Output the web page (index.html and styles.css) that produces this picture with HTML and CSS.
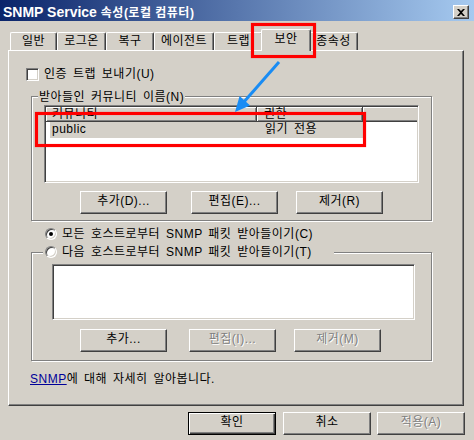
FILE: index.html
```html
<!DOCTYPE html>
<html lang="ko">
<head>
<meta charset="utf-8">
<title>SNMP Service 속성</title>
<link rel="stylesheet" href="styles.css">
</head>
<body>
<div class="titlebar">
  <div class="title">SNMP Service <span class="title-ko">속성(로컬 컴퓨터)</span></div>
  <div class="close"><svg width="8" height="7" viewBox="0 0 8 7"><path d="M0 0h2l2 2 2-2h2L5 3.5 8 7H6L4 5 2 7H0l3-3.5z" fill="#000"/></svg></div>
</div>

<div class="tabs">
  <div class="tab w-general">일반</div>
  <div class="tab w-logon">로그온</div>
  <div class="tab w-recovery">복구</div>
  <div class="tab w-agent">에이전트</div>
  <div class="tab w-traps">트랩</div>
  <div class="tab tab-selected">보안</div>
  <div class="tab w-deps">종속성</div>
</div>

<div class="panel">
  <div class="check-row"><span class="checkbox"></span><span class="label">인증 트랩 보내기(U)</span></div>

  <div class="group group-communities">
    <div class="legend legend-text">받아들인 커뮤니티 이름(N)</div>
    <div class="listview">
      <div class="lv-head">
        <div class="hc col1">커뮤니티</div>
        <div class="hc col2">권한</div>
        <div class="hc col3"></div>
      </div>
      <div class="lv-row">
        <div class="rc col1r">public</div>
        <div class="rc col2r">읽기 전용</div>
      </div>
    </div>
    <div class="btn-row row-a">
      <button class="btn">추가(D)...</button>
      <button class="btn gap-24">편집(E)...</button>
      <button class="btn gap-18">제거(R)</button>
    </div>
  </div>

  <div class="radio-row radio-all"><span class="radio on"><span class="dot"></span></span><span class="label">모든 호스트로부터 SNMP 패킷 받아들이기(C)</span></div>

  <div class="group group-hosts">
    <div class="legend legend-radio radio-row"><span class="radio"></span><span class="label">다음 호스트로부터 SNMP 패킷 받아들이기(T)</span></div>
    <div class="listbox"></div>
    <div class="btn-row row-b">
      <button class="btn">추가...</button>
      <button class="btn disabled gap-22">편집(I)...</button>
      <button class="btn disabled gap-18">제거(M)</button>
    </div>
  </div>

  <div class="link-row"><a class="link">SNMP</a>에 대해 자세히 알아봅니다.</div>
</div>

<div class="dlg-buttons">
  <button class="btn wide default">확인</button>
  <button class="btn wide gap-7">취소</button>
  <button class="btn wide disabled gap-6">적용(A)</button>
</div>

<div class="mark mark-tab"></div>
<div class="mark mark-row"></div>
<svg class="arrow" width="474" height="440" viewBox="0 0 474 440">
  <line x1="279" y1="62" x2="243" y2="103" stroke="#198cf4" stroke-width="3"/>
  <polygon points="235,112 239.6,96.1 250.1,105.4" fill="#198cf4"/>
</svg>
</body>
</html>
```
FILE: styles.css
```css
* { box-sizing: border-box; }
html, body { margin: 0; padding: 0; }
body {
  position: relative;
  width: 474px;
  height: 440px;
  overflow: hidden;
  background: #d4d0c8;
  color: #000;
  font-family: "Liberation Sans", "Noto Sans CJK KR", sans-serif;
  font-size: 12px;
  line-height: 14px;
  word-spacing: 2px;
  letter-spacing: 0.5px;
}

/* title bar */
.titlebar {
  height: 21px;
  display: flex;
  justify-content: space-between;
  align-items: flex-start;
  padding: 0 5px 0 3px;
  background: linear-gradient(to right, #0a246a, #a6caf0);
}
.title {
  color: #fff;
  font-weight: bold;
  font-size: 14px;
  line-height: 20px;
  padding-top: 2px;
  word-spacing: 0;
  letter-spacing: 0;
  white-space: nowrap;
}
.title-ko { font-size: 12px; letter-spacing: 0.5px; }
.close {
  margin-top: 5px;
  width: 16px;
  height: 14px;
  background: #d4d0c8;
  border-top: 1px solid #fff;
  border-left: 1px solid #fff;
  border-right: 1px solid #404040;
  border-bottom: 1px solid #404040;
  box-shadow: inset -1px -1px 0 #808080;
  display: flex;
  align-items: center;
  justify-content: center;
}

/* tabs */
.tabs {
  display: flex;
  align-items: flex-end;
  height: 21px;
  margin-top: 8px;
  padding-left: 10px;
}
.tab {
  height: 18px;
  border-top: 1px solid #fff;
  border-left: 1px solid #fff;
  border-right: 1px solid #404040;
  box-shadow: inset -1px 0 0 #808080;
  border-radius: 2px 2px 0 0;
  text-align: center;
  line-height: 16px;
  white-space: nowrap;
  word-spacing: 0;
}
.w-general { width: 47px; }
.w-logon { width: 49px; }
.w-recovery { width: 48px; }
.w-agent { width: 60px; }
.w-traps { width: 49px; }
.w-deps { width: 49px; }
.tab-selected {
  position: relative;
  z-index: 1;
  width: 50px;
  height: 22px;
  margin: 0 -2px -1px -2px;
  padding-top: 1px;
  background: #d4d0c8;
}

/* panel */
.panel {
  margin-left: 8px;
  width: 456px;
  height: 356px;
  border-top: 1px solid #fff;
  border-left: 1px solid #fff;
  border-right: 1px solid #404040;
  border-bottom: 1px solid #404040;
  box-shadow: inset -1px -1px 0 #808080;
  padding-top: 17px;
}

.check-row {
  display: flex;
  align-items: center;
  height: 13px;
  line-height: 13px;
  margin-left: 17px;
}
.checkbox {
  width: 13px;
  height: 13px;
  background: #fff;
  border-top: 1px solid #808080;
  border-left: 1px solid #808080;
  border-right: 1px solid #fff;
  border-bottom: 1px solid #fff;
  box-shadow: inset 1px 1px 0 #404040, inset -1px -1px 0 #d4d0c8;
  margin-right: 5px;
}

/* group boxes */
.group {
  margin-left: 22px;
  width: 401px;
  border: 1px solid #808080;
  box-shadow: 1px 1px 0 #fff, inset 1px 1px 0 #fff;
}
.group-communities { margin-top: 15px; padding-bottom: 6px; }
.group-hosts { margin-top: 11px; padding-bottom: 8px; }

.legend {
  background: #d4d0c8;
  height: 14px;
  line-height: 14px;
  white-space: nowrap;
}
.legend-text {
  width: max-content;
  margin: -7px 0 0 6px;
  padding: 0 1px;
}
.legend-radio {
  width: 291px;
  margin: -8px 0 0 11px;
  padding-left: 2px;
}

/* list view */
.listview, .listbox {
  background: #fff;
  border-top: 1px solid #808080;
  border-left: 1px solid #808080;
  border-right: 1px solid #fff;
  border-bottom: 1px solid #fff;
  box-shadow: inset 1px 1px 0 #404040, inset -1px -1px 0 #d4d0c8;
  padding: 1px;
}
.listview {
  margin: 1px 0 0 12px;
  width: 375px;
  height: 78px;
}
.lv-head {
  display: flex;
  height: 15px;
}
.hc {
  height: 15px;
  background: #d4d0c8;
  border-right: 1px solid #404040;
  border-bottom: 1px solid #404040;
  box-shadow: inset 1px 1px 0 #fff, inset -1px -1px 0 #808080;
  line-height: 14px;
  white-space: nowrap;
  word-spacing: 0;
}
.col1 { width: 211px; padding-left: 6px; }
.col2 { width: 106px; padding-left: 7px; }
.col3 { flex: 1; border-right: none; box-shadow: inset 1px 1px 0 #fff, inset 0 -1px 0 #808080; }
.lv-row {
  display: flex;
  margin-left: 4px;
  width: 313px;
  height: 16px;
  line-height: 15px;
  background: #d4d0c8;
  white-space: nowrap;
}
.rc { height: 16px; }
.col1r { width: 207px; padding-left: 2px; }
.col2r { padding-left: 8px; }

.listbox {
  margin: 5px 0 0 20px;
  width: 363px;
  height: 56px;
}

/* buttons */
.btn-row {
  display: flex;
  margin-left: 48px;
}
.row-a { margin-top: 8px; }
.row-b { margin-top: 9px; }
.btn {
  width: 87px;
  height: 23px;
  padding: 0 0 2px 0;
  margin: 0;
  font: inherit;
  letter-spacing: 0.5px;
  line-height: 19px;
  color: #000;
  background: #d4d0c8;
  border-top: 1px solid #fff;
  border-left: 1px solid #fff;
  border-right: 1px solid #404040;
  border-bottom: 1px solid #404040;
  box-shadow: inset -1px -1px 0 #808080;
  border-radius: 0;
  white-space: nowrap;
  word-spacing: 0;
}
.btn.wide { width: 88px; }
.btn.disabled {
  color: #808080;
  text-shadow: 1px 1px 0 #fff;
}
.btn.default {
  border: 1px solid #000;
  box-shadow: inset 1px 1px 0 #fff, inset -1px -1px 0 #404040, inset -2px -2px 0 #808080;
}
.gap-24 { margin-left: 24px; }
.gap-22 { margin-left: 22px; }
.gap-18 { margin-left: 18px; }
.gap-7 { margin-left: 7px; }
.gap-6 { margin-left: 6px; }

/* radios */
.radio-row {
  display: flex;
  align-items: center;
  height: 14px;
  line-height: 14px;
  white-space: nowrap;
}
.radio-all {
  margin: 6px 0 0 36px;
}
.radio {
  width: 12px;
  height: 12px;
  border-radius: 50%;
  background: #fff;
  border-top: 1px solid #808080;
  border-left: 1px solid #808080;
  border-right: 1px solid #fff;
  border-bottom: 1px solid #fff;
  box-shadow: inset 1px 1px 0 #404040, inset -1px -1px 0 #d4d0c8;
  margin-right: 5px;
  display: flex;
  align-items: center;
  justify-content: center;
  flex: none;
}
.dot {
  width: 4px;
  height: 4px;
  border-radius: 50%;
  background: #000;
}

/* link */
.link-row {
  margin: 11px 0 0 21px;
  height: 14px;
  line-height: 14px;
  white-space: nowrap;
}
.link {
  color: #000099;
  text-decoration: underline;
}

/* dialog buttons */
.dlg-buttons {
  display: flex;
  margin-top: 6px;
  padding-left: 188px;
}

/* annotation overlays */
.mark {
  position: absolute;
  border: 3px solid #ff0000;
  box-shadow: 0 0 1px rgba(255, 0, 0, 0.6), inset 0 0 1px rgba(255, 0, 0, 0.6);
}
.mark-tab { left: 251px; top: 23px; width: 65px; height: 35px; }
.mark-row { left: 35px; top: 112px; width: 331px; height: 35px; }
.arrow {
  position: absolute;
  left: 0;
  top: 0;
  pointer-events: none;
}
```
